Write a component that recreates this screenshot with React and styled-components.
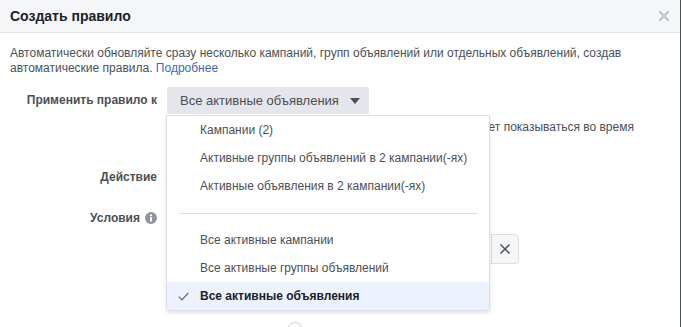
import styled, {createGlobalStyle} from "styled-components"

const GlobalStyle = createGlobalStyle`
    html, body {
        margin: 0;
        padding: 0;
        background: #4b4f56;
    }
    body {
        font-family: "Liberation Sans", Arial, Helvetica, sans-serif;
        font-size: 12px;
        color: #4b4f56;
    }
`

const Dialog = styled.div`
    width: 680px;
    height: 327px;
    background: #fff;
    overflow: hidden;
`

const Header = styled.div`
    height: 32px;
    padding: 0 10px;
    background: #f5f6f7;
    border-bottom: 1px solid #e5e5e5;
    display: flex;
    flex-direction: row;
    align-items: center;
    justify-content: space-between;
`

const Title = styled.h1`
    margin: 0;
    font-size: 14px;
    font-weight: 700;
    color: #1d2129;
`

const CloseButton = styled.button`
    border: 0;
    padding: 0;
    margin-right: 1px;
    background: none;
    display: flex;
    cursor: pointer;
`

const Body = styled.div`
    padding: 13px 10px 0;
`

const Intro = styled.p`
    margin: 0;
    line-height: 15px;
    color: #4b4f56;
`

const Link = styled.a`
    color: #4267b2;
    text-decoration: none;
`

const Form = styled.div`
    margin-top: 11px;
    display: grid;
    grid-template-columns: 147px 1fr;
    column-gap: 10px;
    align-items: start;
`

const Label = styled.div`
    font-weight: 700;
    color: #4b4f56;
    line-height: ${p => p.$line || 16}px;
    margin-top: ${p => p.$top || 0}px;
    display: flex;
    justify-content: flex-end;
    align-items: center;
    gap: 5px;
`

const Field = styled.div`
    margin-top: ${p => p.$top || 0}px;
    display: flex;
    flex-direction: column;
    align-items: flex-start;
`

const SelectWrap = styled.div`
    position: relative;
`

const SelectButton = styled.button`
    height: 27px;
    padding: 0 9px 0 13px;
    border: 0;
    border-radius: 2px;
    background: #e4e6eb;
    color: #4b4f56;
    font: inherit;
    font-size: 13px;
    display: flex;
    align-items: center;
    gap: 11px;
    cursor: pointer;
`

const Hint = styled.div`
    margin-top: 6px;
    line-height: 15px;
    white-space: nowrap;
`

const Menu = styled.ul`
    position: absolute;
    top: 28px;
    left: -1px;
    width: 322px;
    margin: 0;
    padding: 0;
    list-style: none;
    background: #fff;
    border: 1px solid #dddfe2;
    border-radius: 0 0 3px 3px;
    box-shadow: 0 2px 4px rgba(0, 0, 0, 0.12);
    z-index: 2;
`

const MenuItem = styled.li`
    height: 28px;
    padding-left: 33px;
    position: relative;
    display: flex;
    align-items: center;
    background: ${p => (p.$selected ? "#ecf3ff" : "transparent")};
    color: ${p => (p.$selected ? "#1d2129" : "#4b4f56")};
    font-weight: ${p => (p.$selected ? 700 : 400)};
`

const Check = styled.span`
    position: absolute;
    left: 11px;
    top: 10px;
    display: flex;
`

const Separator = styled.li`
    height: 26px;
    display: flex;
    align-items: center;
    padding: 0 11px 0 12px;
    &::after {
        content: "";
        flex: 1;
        height: 1px;
        background: #dddfe2;
    }
`

const ActionBox = styled.div`
    width: 300px;
    height: 28px;
    border: 1px solid #dddfe2;
    border-radius: 3px;
    box-sizing: border-box;
`

const ConditionRow = styled.div`
    margin-top: 24px;
    width: 352px;
    height: 30px;
    display: flex;
`

const ConditionSelect = styled.div`
    flex: 1;
    border: 1px solid #dddfe2;
    border-right: 0;
    border-radius: 3px 0 0 3px;
`

const RemoveButton = styled.button`
    width: 28px;
    padding: 0;
    border: 1px solid #dddfe2;
    border-radius: 0 4px 4px 0;
    background: #f5f6f7;
    display: flex;
    align-items: center;
    justify-content: center;
    cursor: pointer;
`

const AddRow = styled.div`
    margin-top: 58px;
    padding-left: 120px;
    display: flex;
`

const Caret = () => (
    <svg width="10" height="6" viewBox="0 0 10 6">
        <path d="M0 0h10L5 6z" fill="#4b4f56" />
    </svg>
)

const InfoIcon = () => (
    <svg width="12" height="12" viewBox="0 0 12 12">
        <circle cx="6" cy="6" r="6" fill="#90949c" />
        <circle cx="6" cy="3.3" r="1.1" fill="#fff" />
        <rect x="5" y="5" width="2" height="4.6" rx="0.5" fill="#fff" />
    </svg>
)

const Cross = ({size, color, width}) => (
    <svg width={size} height={size} viewBox="0 0 10 10">
        <path d="M1 1l8 8M9 1l-8 8" stroke={color} strokeWidth={width} strokeLinecap="square" />
    </svg>
)

const CheckMark = () => (
    <svg width="11" height="9" viewBox="0 0 11 9">
        <path d="M0.8 4.6l3.2 3.2L10.2 1" stroke="#606770" strokeWidth="1.2" fill="none" />
    </svg>
)

const options = [
    {label: "Кампании (2)"},
    {label: "Активные группы объявлений в 2 кампании(-ях)"},
    {label: "Активные объявления в 2 кампании(-ях)"},
    {divider: true},
    {label: "Все активные кампании"},
    {label: "Все активные группы объявлений"},
    {label: "Все активные объявления", selected: true},
]

export default function App() {
    return (
        <>
            <GlobalStyle />
            <Dialog>
                <Header>
                    <Title>Создать правило</Title>
                    <CloseButton>
                        <Cross size={10} color="#bec3c9" width={2.2} />
                    </CloseButton>
                </Header>
                <Body>
                    <Intro>
                        Автоматически обновляйте сразу несколько кампаний, групп объявлений или отдельных объявлений, создав
                        автоматические правила. <Link href="#">Подробнее</Link>
                    </Intro>
                    <Form>
                        <Label $line={27}>Применить правило к</Label>
                        <Field>
                            <SelectWrap>
                                <SelectButton>
                                    Все активные объявления
                                    <Caret />
                                </SelectButton>
                                <Menu>
                                    {options.map((o, i) =>
                                        o.divider ? (
                                            <Separator key={i} />
                                        ) : (
                                            <MenuItem key={i} $selected={o.selected}>
                                                {o.selected && (
                                                    <Check>
                                                        <CheckMark />
                                                    </Check>
                                                )}
                                                {o.label}
                                            </MenuItem>
                                        )
                                    )}
                                </Menu>
                            </SelectWrap>
                            <Hint>Правило применяется ко всем объявлениям, которое будет показываться во время</Hint>
                        </Field>

                        <Label $line={28} $top={28}>Действие</Label>
                        <Field $top={28}>
                            <ActionBox />
                        </Field>

                        <Label $top={19}>
                            Условия <InfoIcon />
                        </Label>
                        <Field $top={19}>
                            <ConditionRow>
                                <ConditionSelect />
                                <RemoveButton>
                                    <Cross size={10} color="#4b4f56" width={1.5} />
                                </RemoveButton>
                            </ConditionRow>
                        </Field>

                        <div />
                        <AddRow>
                            <svg width="16" height="16" viewBox="0 0 16 16">
                                <circle cx="8" cy="8" r="7.5" fill="none" stroke="#ccd0d5" />
                            </svg>
                        </AddRow>
                    </Form>
                </Body>
            </Dialog>
        </>
    )
}
